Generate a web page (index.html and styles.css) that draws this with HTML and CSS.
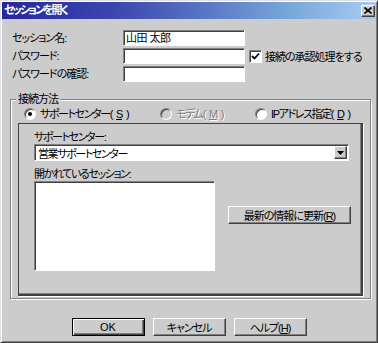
FILE: index.html
```html
<!DOCTYPE html>
<html>
<head>
    <title>セッションを開く</title>
    <link rel="stylesheet" href="styles.css">
    <meta charset="UTF-8">
</head>
<body>
<div class="window">
    <div class="titlebar">
        <span class="title">セッションを開く</span>
        <span class="close-btn">
            <svg width="8" height="7" viewBox="0 0 8 7"><path d="M0.5 0.5 L7.5 6.5 M7.5 0.5 L0.5 6.5" stroke="#000" stroke-width="1.6" fill="none"/></svg>
        </span>
    </div>

    <div class="form">
        <label class="field-label">セッション名:</label>
        <div class="textbox">山田 太郎</div>
        <div></div>

        <label class="field-label">パスワード:</label>
        <div class="textbox"></div>
        <div class="check">
            <span class="checkbox">
                <svg width="9" height="9" viewBox="0 0 9 9"><path d="M1 4 L3.5 6.5 L8 1.5" stroke="#000" stroke-width="1.8" fill="none"/></svg>
            </span>
            <span>接続の承認処理をする</span>
        </div>

        <label class="field-label">パスワードの確認:</label>
        <div class="textbox"></div>
        <div></div>
    </div>

    <div class="group">
        <span class="group-title">接続方法</span>
        <div class="radios">
            <div class="radio-item"><span class="radio checked"></span>サポートセンター(<u>S</u>)</div>
            <div class="radio-item disabled"><span class="radio"></span>モデム(<u>M</u>)</div>
            <div class="radio-item"><span class="radio"></span>IPアドレス指定(<u>D</u>)</div>
        </div>
        <div class="panel">
            <div class="panel-label kana">サポートセンター:</div>
            <div class="combo">
                <span class="combo-text kana">営業サポートセンター</span>
                <span class="combo-btn">
                    <svg width="7" height="4" viewBox="0 0 7 4"><path d="M0 0 H7 L3.5 4 Z" fill="#000"/></svg>
                </span>
            </div>
            <div class="panel-label second kana">開かれているセッション:</div>
            <div class="session-row">
                <div class="listbox"></div>
                <button class="btn refresh-btn">最新の情報に更新(<u>R</u>)</button>
            </div>
        </div>
    </div>

    <div class="footer">
        <button class="btn default-btn">OK</button>
        <button class="btn">キャンセル</button>
        <button class="btn">ヘルプ(<u>H</u>)</button>
    </div>
</div>
</body>
</html>
```

FILE: styles.css
```css
* {
    box-sizing: border-box;
}
body {
    margin: 0;
    background-color: #cccccc;
    font-family: "Liberation Sans", "Noto Sans CJK JP", sans-serif;
    font-size: 11px;
    font-feature-settings: "palt";
    letter-spacing: -1px;
    color: #000;
}
.kana {
    letter-spacing: -1.4px;
}
.window {
    width: 378px;
    height: 343px;
    padding: 1px;
    border: 1px solid;
    border-color: #e0e0e0 #404040 #404040 #e0e0e0;
    box-shadow: inset 1px 1px #fff, inset -1px -1px #808080;
    background-color: #cccccc;
}
.titlebar {
    height: 17px;
    display: flex;
    align-items: center;
    justify-content: space-between;
    padding: 0 1px 0 2px;
    background: linear-gradient(to right, #26269a 0%, #3c46b0 30%, #5a78c4 55%, #74a4d8 75%, #a8ccf0 100%);
}
.title {
    color: #fff;
    font-weight: bold;
    letter-spacing: -2px;
    line-height: 17px;
}
.close-btn {
    width: 14px;
    height: 12px;
    display: flex;
    align-items: center;
    justify-content: center;
    background-color: #cccccc;
    border: 1px solid;
    border-color: #fff #404040 #404040 #fff;
    box-shadow: inset -1px -1px #808080;
}

/* upper form */
.form {
    margin: 11px 0 0 10px;
    display: grid;
    grid-template-columns: 111px 122px auto;
    grid-auto-rows: 16px;
    row-gap: 2px;
}
.field-label {
    line-height: 16px;
}
.textbox {
    background-color: #fff;
    border: 1px solid;
    border-color: #808080 #fff #fff #808080;
    box-shadow: inset 1px 1px #404040;
    padding: 0 2px;
    line-height: 14px;
    letter-spacing: -0.5px;
}
.check {
    display: flex;
    align-items: center;
    margin-left: 4px;
    gap: 3px;
    white-space: nowrap;
}
.checkbox {
    width: 13px;
    height: 13px;
    display: flex;
    align-items: center;
    justify-content: center;
    background-color: #fff;
    border: 1px solid;
    border-color: #808080 #fff #fff #808080;
    box-shadow: inset 1px 1px #404040;
}

/* group box */
.group {
    position: relative;
    margin: 17px 0 0 8px;
    width: 361px;
    height: 200px;
    border: 1px solid #808080;
    box-shadow: inset 1px 1px #fff, 1px 1px #fff;
}
.group-title {
    position: absolute;
    top: -8px;
    left: 5px;
    padding: 0 2px;
    line-height: 14px;
    background-color: #cccccc;
}
.radios {
    margin-top: 7px;
    padding-left: 13px;
    height: 14px;
    display: grid;
    grid-template-columns: 136px 95px auto;
    letter-spacing: -1.4px;
}
.radio-item {
    display: flex;
    align-items: center;
    gap: 4px;
    line-height: 14px;
    white-space: nowrap;
}
.radio-item.disabled {
    color: #808080;
    text-shadow: 1px 1px #fff;
}
.radio {
    position: relative;
    width: 12px;
    height: 12px;
    border-radius: 50%;
    background-color: #fff;
    border: 1px solid;
    border-color: #808080 #fff #fff #808080;
    box-shadow: inset 1px 1px #404040;
}
.radio-item.disabled .radio {
    background-color: #cccccc;
}
.radio.checked::after {
    content: "";
    position: absolute;
    left: 3px;
    top: 3px;
    width: 4px;
    height: 4px;
    border-radius: 50%;
    background-color: #000;
}
.panel {
    margin: 2px 0 0 7px;
    width: 345px;
    height: 173px;
    padding: 6px 0 0 15px;
    border-style: solid;
    border-width: 1px 2px 2px 1px;
    border-color: #404040;
    box-shadow: inset -1px -1px #808080, 1px 1px #fff;
}
.panel-label {
    line-height: 14px;
}
.panel-label.second {
    margin-top: 7px;
    line-height: 13px;
}
.combo {
    width: 315px;
    height: 17px;
    display: flex;
    align-items: center;
    justify-content: space-between;
    background-color: #fff;
    border: 1px solid;
    border-color: #808080 #fff #fff #808080;
    box-shadow: inset 1px 1px #404040;
    padding: 1px 1px 1px 3px;
}
.combo-btn {
    width: 13px;
    height: 13px;
    display: flex;
    align-items: center;
    justify-content: center;
    background-color: #cccccc;
    border: 1px solid;
    border-color: #fff #404040 #404040 #fff;
    box-shadow: inset -1px -1px #808080;
}
.session-row {
    display: flex;
    align-items: flex-start;
}
.listbox {
    width: 181px;
    height: 90px;
    background-color: #fff;
    border: 1px solid;
    border-color: #808080 #fff #fff #808080;
    box-shadow: inset 1px 1px #404040;
}

/* buttons */
.btn {
    height: 18px;
    width: 73px;
    padding: 0;
    font-family: inherit;
    font-size: 11px;
    font-weight: normal;
    font-feature-settings: "palt";
    letter-spacing: -1px;
    color: #000;
    background-color: #cccccc;
    border: 1px solid;
    border-color: #fff #404040 #404040 #fff;
    box-shadow: inset -1px -1px #808080;
}
.refresh-btn {
    width: 123px;
    margin: 25px 0 0 13px;
}
.default-btn {
    letter-spacing: 0;
    border-color: #000;
    box-shadow: inset 1px 1px #fff, inset -1px -1px #404040, inset -2px -2px #808080;
}
.footer {
    margin-top: 19px;
    display: flex;
    justify-content: center;
    gap: 8px;
}
u {
    text-decoration: underline;
}
```
